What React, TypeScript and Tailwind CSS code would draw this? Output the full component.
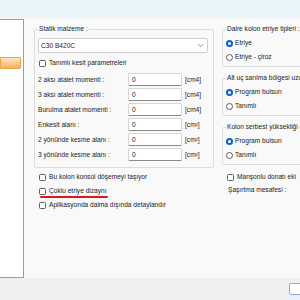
import React from "react";

const Check = ({ label, className = "" }: { label: string; className?: string }) => (
	<div className={`flex items-center h-[8px] gap-[3px] ${className}`}>
		<span className="w-[7px] h-[7px] shrink-0 rounded-[1.5px] border border-[#5c5c5c] bg-white" />
		<span className="whitespace-nowrap">{label}</span>
	</div>
);

const Radio = ({ label, checked = false }: { label: string; checked?: boolean }) => (
	<div className="flex items-center h-[8px] gap-[2px]">
		{checked ? (
			<span className="w-[7px] h-[7px] shrink-0 rounded-full bg-[#0a63c4] flex items-center justify-center">
				<span className="w-[3px] h-[3px] rounded-full bg-white" />
			</span>
		) : (
			<span className="w-[7px] h-[7px] shrink-0 rounded-full border border-[#5c5c5c] bg-white" />
		)}
		<span className="whitespace-nowrap">{label}</span>
	</div>
);

const fields = [
	["2 aksı atalet momenti :", "[cm4]"],
	["3 aksı atalet momenti :", "[cm4]"],
	["Burulma atalet momenti :", "[cm4]"],
	["Enkesit alanı :", "[cm²]"],
	["2 yönünde kesme alanı :", "[cm²]"],
	["3 yönünde kesme alanı :", "[cm²]"],
];

const RadioGroup = ({ title }: { title: string }) => (
	<fieldset className="mt-[7px] border border-[#dcdcdc] rounded-[2px] pl-[3px] pb-[5px] min-w-0">
		<legend className="px-[1px] leading-[8px] whitespace-nowrap">{title}</legend>
		<div className="mt-[6px] flex flex-col gap-[6px]">
			<Radio label="Program bulsun" checked />
			<Radio label="Tanımlı" />
		</div>
	</fieldset>
);

export default function App() {
	return (
		<div
			className="w-[300px] h-[300px] overflow-hidden flex flex-col bg-[#f9f9f9] text-[#1b1b1b] text-[6.6px] leading-[8px]"
			style={{ fontFamily: '"Liberation Sans", Arial, sans-serif' }}
		>
			<div className="h-[18px] shrink-0 bg-[#e9f5f8]" />

			<div className="flex-1 flex min-h-0">
				{/* side list */}
				<div className="w-[24px] shrink-0 mt-[1px] bg-white border-t border-r border-b border-[#9c9c9c]">
					<div className="mt-[37px] h-[12px] w-[21px] rounded-r-[1px] border border-[#e9a54a] bg-gradient-to-b from-[#fde6c0] to-[#f6b35a]" />
				</div>

				{/* left column */}
				<div className="ml-[10px] w-[180px] shrink-0">
					<fieldset className="mt-[7px] border border-[#dcdcdc] rounded-[2px] px-[3px] pb-[6px] min-w-0">
						<legend className="px-[1px] leading-[8px]">Statik malzeme :</legend>
						<div className="mt-[5px] w-[170px] h-[15px] flex items-center justify-between px-[2px] bg-white border border-[#cfcfcf] rounded-[2px]">
							<span>C30 B420C</span>
							<svg width="7" height="5" viewBox="0 0 7 5" fill="none" className="mr-[1px]">
								<path d="M1 1.2 3.5 3.7 6 1.2" stroke="#6b6b6b" strokeWidth="0.8" />
							</svg>
						</div>
						<Check label="Tanımlı kesit parametreleri" className="mt-[6px] ml-[1px]" />
						<div className="mt-[6px] flex flex-col gap-[2px]">
							{fields.map(([label, unit]) => (
								<div key={label} className="flex items-center h-[13px]">
									<span className="w-[90px] whitespace-nowrap">{label}</span>
									<div className="w-[54px] h-[13px] flex items-center px-[3px] bg-white border border-[#d6d6d6] border-b-[#8a8a8a] rounded-[1.5px]">
										0
									</div>
									<span className="ml-[3px] whitespace-nowrap">{unit}</span>
								</div>
							))}
						</div>
					</fieldset>

					<div className="mt-[5px] ml-[5px] flex flex-col gap-[6px]">
						<Check label="Bu kolon konsol döşemeyi taşıyor" />
						<div className="relative">
							<Check label="Çoklu etriye dizaynı" />
							<span className="absolute left-[1px] top-[9px] w-[68px] h-[1.5px] rounded-full bg-[#e0141e]" />
						</div>
						<Check label="Aplikasyonda daima dışında detaylandır" />
					</div>
				</div>

				{/* right column */}
				<div className="ml-[8px] w-[110px] shrink-0">
					<fieldset className="mt-[7px] border border-[#dcdcdc] rounded-[2px] pl-[3px] pb-[5px] min-w-0">
						<legend className="px-[1px] leading-[8px] whitespace-nowrap">Daire kolon etriye tipleri :</legend>
						<div className="mt-[6px] flex flex-col gap-[6px]">
							<Radio label="Etriye" checked />
							<Radio label="Etriye - çiroz" />
						</div>
					</fieldset>
					<RadioGroup title="Alt uç sarılma bölgesi uzunluğu" />
					<RadioGroup title="Kolon serbest yüksekliği (Lu)" />
					<div className="mt-[8px] ml-[5px] flex flex-col gap-[5px]">
						<Check label="Manşonlu donatı eki" />
						<span className="ml-[1px] whitespace-nowrap">Şaşırtma mesafesi :</span>
					</div>
				</div>
			</div>

			<div className="h-[22px] shrink-0 bg-[#f0f0f0] pt-[5px] pl-[289px]">
				<div className="w-[40px] h-[12px] bg-white border border-[#7fb0e3] rounded-[2px]" />
			</div>
		</div>
	);
}
